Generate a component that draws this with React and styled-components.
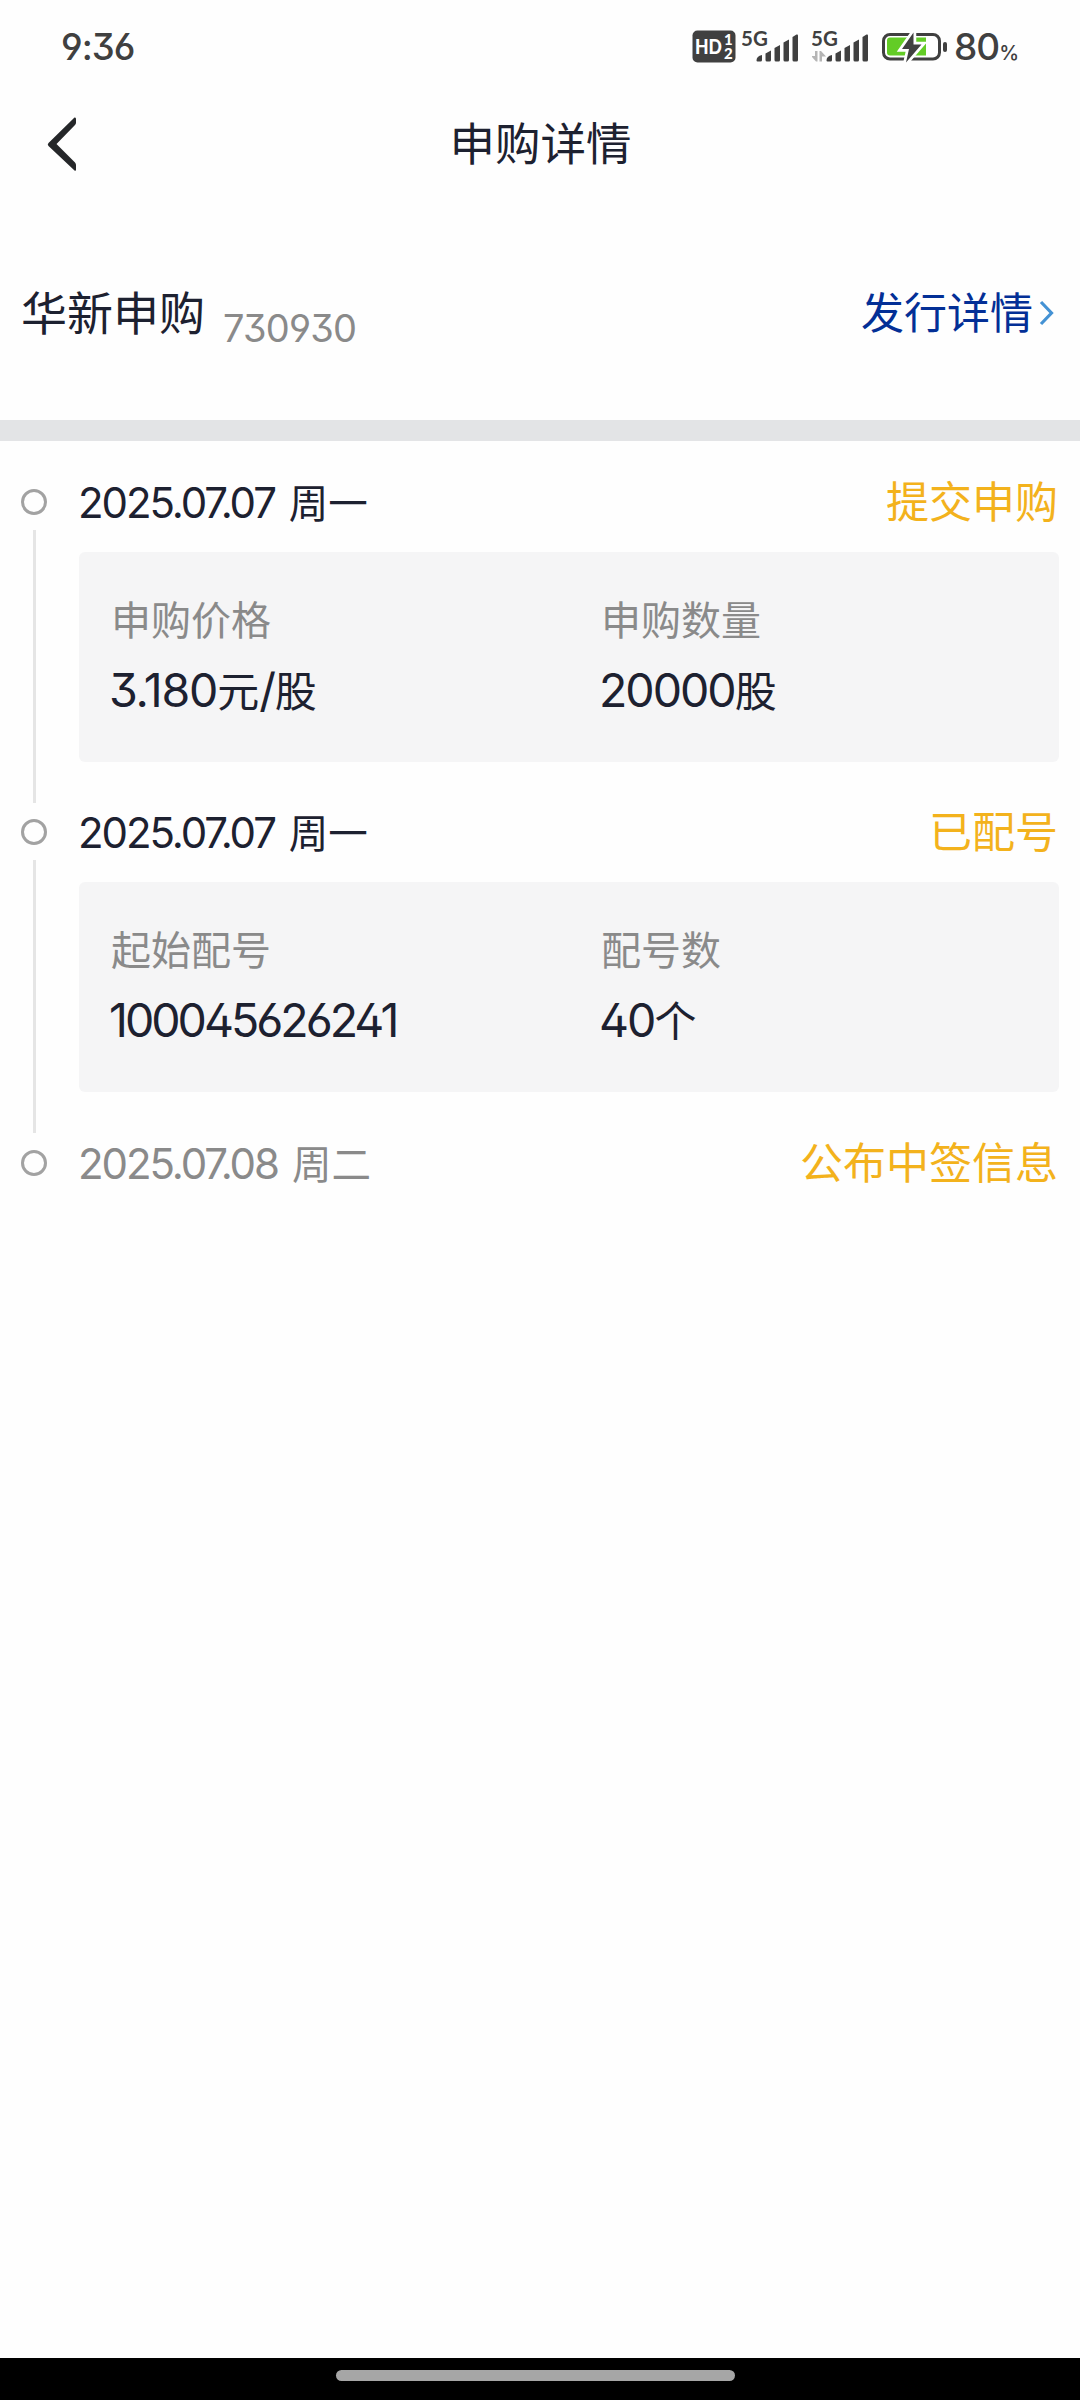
import styled, { createGlobalStyle } from "styled-components";

const steps = [
    {
        date: "2025.07.07",
        day: "周一",
        status: "提交申购",
        fields: [
            { label: "申购价格", parts: [{ num: "3.180" }, { cjk: "元" }, { num: "/" }, { cjk: "股" }], tight: -1.2 },
            { label: "申购数量", parts: [{ num: "20000" }, { cjk: "股" }], tight: -2 },
        ],
    },
    {
        date: "2025.07.07",
        day: "周一",
        status: "已配号",
        fields: [
            { label: "起始配号", parts: [{ num: "100045626241" }], tight: -3 },
            { label: "配号数", parts: [{ num: "40" }, { cjk: "个" }], tight: -2 },
        ],
    },
    { date: "2025.07.08", day: "周二", status: "公布中签信息", pending: true },
];

function Signal({ data }) {
    return (
        <svg width="64" height="40" viewBox="0 0 64 40">
            <text x="-1" y="19" fontFamily="Lato, sans-serif" fontWeight="700" fontSize="20.500" fill="#404040">5G</text>
            {data && (
                <path d="M5.500 24v10.500H4L-1 29h4v-5zM7.500 34.500V24H9l5 5.500h-4v5z" fill="#b5b5b5" />
            )}
            <g fill="#404040" transform="translate(-1 0)">
                <path d="M15.500 33.500Q15.500 29 21 28V33q0 1.500-1.500 1.500h-3q-1 0-1-1z" />
                <path d="M24.500 26.500l5.500-3V33q0 1.500-1.500 1.500h-2.500q-1.500 0-1.500-1.500z" />
                <path d="M33.500 21l5.500-3V33q0 1.500-1.500 1.500h-2.500q-1.500 0-1.500-1.500z" />
                <path d="M42.500 15.500l5.500-3V33q0 1.500-1.500 1.500h-2.500q-1.500 0-1.500-1.500z" />
                <path d="M51.500 10l4-2.500q1.500-.5 1.500 1V33q0 1.500-1.500 1.500h-2.500q-1.500 0-1.500-1.500z" />
            </g>
        </svg>
    )
}

function HdBadge() {
    return (
        <svg width="44" height="34" viewBox="0 0 44 34">
            <rect x="0.500" y="0.500" width="43" height="32" rx="5" fill="#404040" />
            <g fill="#fff" fontFamily="Lato, sans-serif" fontWeight="900">
                <text x="3" y="24" fontSize="20" textLength="27" lengthAdjust="spacingAndGlyphs">HD</text>
                <text x="32" y="15" fontSize="15">1</text>
                <text x="32" y="29" fontSize="15">2</text>
            </g>
        </svg>
    )
}

function Battery() {
    return (
        <svg width="66" height="34" viewBox="0 0 66 34">
            <rect x="1.500" y="4.500" width="56" height="24.500" rx="6.500" fill="#fff" stroke="#404040" strokeWidth="3" />
            <path d="M8 7.500h36v18H8q-3 0-3-3v-12q0-3 3-3z" fill="#63cc26" />
            <path d="M31.500 2.500L20 19h7l-3 13.500L39.500 14.500h-8z" fill="#404040" stroke="#fff" strokeWidth="5.500" paintOrder="stroke" />
            <rect x="61" y="12" width="4" height="10" rx="2" fill="#404040" />
        </svg>
    )
}

function Step({ step }) {
    return (
        <StepRow>
            <Rail>
                <Dot />
                {step.fields && <Line />}
            </Rail>
            <StepBody>
                <StepHead>
                    <StepDate $pending={step.pending}>
                        <b>{step.date}</b>
                        {step.day}
                    </StepDate>
                    <Status>{step.status}</Status>
                </StepHead>
                {step.fields && (
                    <Card>
                        {step.fields.map((field) => (
                            <Field key={field.label}>
                                <Label>{field.label}</Label>
                                <Value $tight={field.tight}>
                                    {field.parts.map((part, i) => (
                                        part.num ? <b key={i}>{part.num}</b> : <span key={i}>{part.cjk}</span>
                                    ))}
                                </Value>
                            </Field>
                        ))}
                    </Card>
                )}
            </StepBody>
        </StepRow>
    )
}

export default function App() {
    return (
        <Container>
            <GlobalStyle />
            <StatusBar>
                <Clock>9:36</Clock>
                <StatusIcons>
                    <HdBadge />
                    <Signal />
                    <Signal data />
                    <Battery />
                    <Percent>80<small>%</small></Percent>
                </StatusIcons>
            </StatusBar>
            <NavBar>
                <BackButton aria-label="返回">
                    <svg width="32" height="58" viewBox="0 0 32 58">
                        <path d="M27.500 1.500q1.500-.5 1.500 1.500v3.500q0 1.500-1 2.500L9.500 28 28 46.500q1 1 1 2.500v4.500q0 2-1.500 1L1.500 30q-1.500-1.500 0-3z" fill="#252729" />
                    </svg>
                </BackButton>
                <Title>申购详情</Title>
            </NavBar>
            <Stock>
                <StockName>华新申购</StockName>
                <StockCode>730930</StockCode>
                <DetailLink>
                    发行详情
                    <svg width="16" height="26" viewBox="0 0 16 26">
                        <path d="M2 2l10.500 11L2 24" fill="none" stroke="#4492d4" strokeWidth="3.200" />
                    </svg>
                </DetailLink>
            </Stock>
            <Timeline>
                {steps.map((step, i) => <Step key={i} step={step} />)}
            </Timeline>
            <HomeBar>
                <Handle />
            </HomeBar>
        </Container>
    )
}

const GlobalStyle = createGlobalStyle`
    * {
        box-sizing: border-box;
    }
    body {
        margin: 0;
        background-color: #ffffff;
    }
    b {
        font-weight: 380;
    }
    svg {
        display: block;
        flex-shrink: 0;
    }
`;

const Container = styled.div`
    width: 1080px;
    height: 2400px;
    display: flex;
    flex-direction: column;
    background-color: #fefefe;
    color: #1d2130;
    font-family: Inter, "Noto Sans CJK SC", sans-serif;
    font-feature-settings: "ss01", "cv09";
    white-space: nowrap;
`;

const StatusBar = styled.div`
    height: 94px;
    padding: 0 62px 0 61px;
    display: flex;
    justify-content: space-between;
    align-items: center;
    color: #404040;
`;

const Clock = styled.div`
    font-size: 36.500px;
    font-weight: 500;
    line-height: 44px;
    letter-spacing: -1px;
`;

const StatusIcons = styled.div`
    height: 40px;
    display: flex;
    align-items: center;
    gap: 6px;
`;

const Percent = styled.div`
    padding-top: 5px;
    font-size: 37px;
    font-weight: 500;
    line-height: 44px;
    letter-spacing: -1px;
    small {
        font-size: 20px;
    }
`;

const NavBar = styled.div`
    height: 100px;
    display: flex;
    align-items: center;
    padding: 0 47px;
`;

const BackButton = styled.button`
    width: 32px;
    padding: 2px 0 0;
    border: none;
    background: none;
`;

const Title = styled.h1`
    flex: 1;
    margin: 1px 31px 0 0;
    text-align: center;
    font-size: 45.500px;
    font-weight: 400;
    line-height: 60px;
`;

const Stock = styled.div`
    height: 247px;
    padding: 89px 25px 0 21px;
    display: flex;
    align-items: flex-start;
    border-bottom: 21px solid #e3e4e6;
    flex-shrink: 0;
    line-height: 60px;
`;

const StockName = styled.div`
    font-size: 46px;
`;

const StockCode = styled.div`
    margin: 15px 0 0 18px;
    font-size: 38px;
    letter-spacing: -0.800px;
    color: #8a8a8a;
`;

const DetailLink = styled.div`
    margin-left: auto;
    display: flex;
    align-items: center;
    gap: 6px;
    font-size: 43px;
    color: #032f96;
`;

const Timeline = styled.div`
    flex: 1;
    padding: 24px 21px 0;
`;

const StepRow = styled.div`
    display: flex;
    height: 330px;
    &:last-child {
        padding-top: 1px;
    }
`;

const Rail = styled.div`
    width: 58px;
    padding-top: 24px;
    display: flex;
    flex-direction: column;
    gap: 15px;
`;

const Dot = styled.div`
    width: 26px;
    height: 26px;
    border: 3px solid #a2a2a2;
    border-radius: 50%;
    flex-shrink: 0;
`;

const Line = styled.div`
    width: 3px;
    height: 273px;
    margin-left: 12px;
    background-color: #e5e5e5;
    flex-shrink: 0;
`;

const StepBody = styled.div`
    flex: 1;
`;

const StepHead = styled.div`
    height: 87px;
    padding: 1px 1px 0 0;
    display: flex;
    justify-content: space-between;
    line-height: 72px;
`;

const StepDate = styled.div`
    padding-top: 1px;
    font-size: 39.500px;
    color: ${(props) => props.$pending ? "#8a8a8a" : "#1d2130"};
    b {
        margin-left: -1px;
        margin-right: 14px;
        font-size: 42px;
        letter-spacing: -2.100px;
    }
`;

const Status = styled.div`
    font-size: 43px;
    color: #f3b21c;
`;

const Card = styled.div`
    height: 210px;
    padding: 39px 32px;
    display: grid;
    grid-template-columns: 490px 1fr;
    border-radius: 6px;
    background-color: #f5f5f6;
`;

const Field = styled.div`
    display: flex;
    flex-direction: column;
    gap: 8px;
`;

const Label = styled.div`
    font-size: 40px;
    line-height: 60px;
    color: #8a8a8a;
`;

const Value = styled.div`
    margin-left: -2px;
    font-size: 42px;
    line-height: 63px;
    b {
        font-size: 46.500px;
        letter-spacing: ${(props) => props.$tight}px;
    }
`;

const HomeBar = styled.div`
    height: 42px;
    display: flex;
    justify-content: center;
    padding-top: 12px;
    background-color: #000000;
`;

const Handle = styled.div`
    width: 399px;
    height: 11px;
    margin-right: 10px;
    border-radius: 6px;
    background-color: #a6a6a6;
`;
